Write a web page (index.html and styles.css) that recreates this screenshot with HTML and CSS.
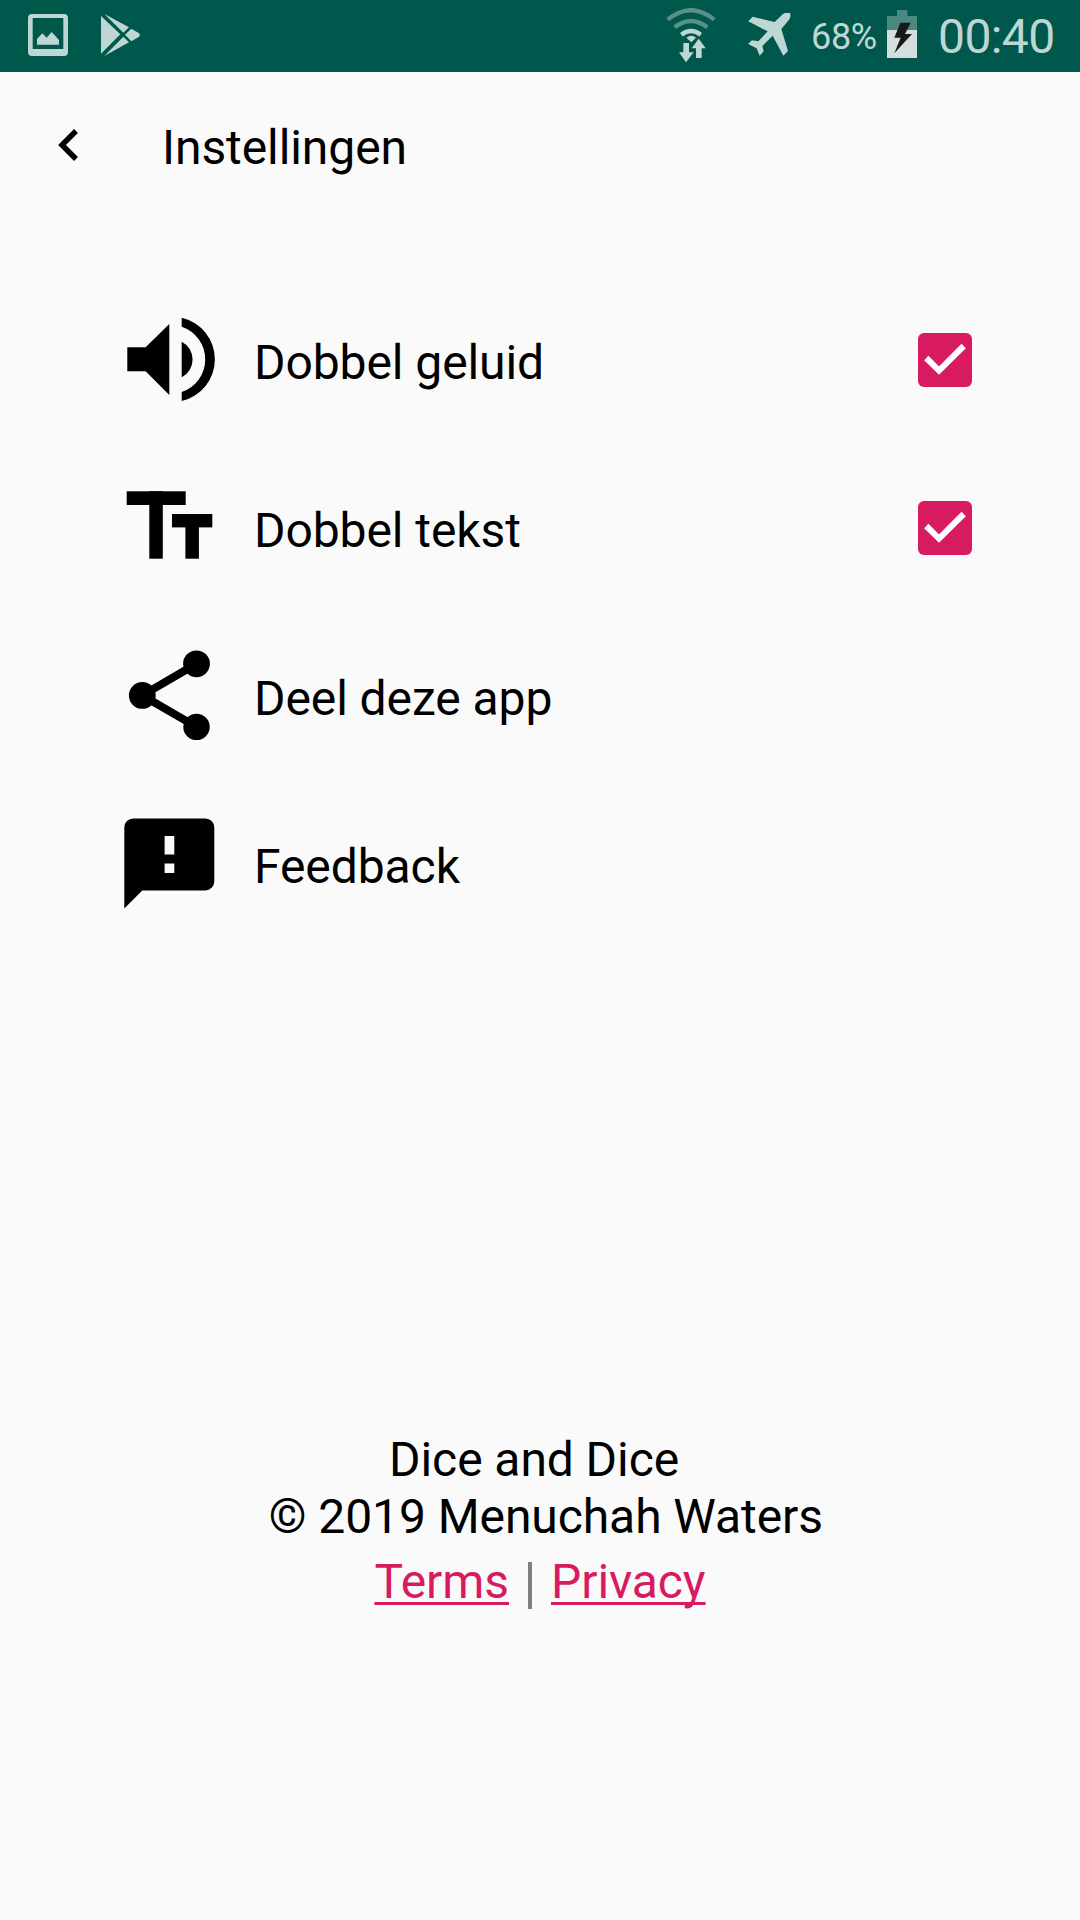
FILE: index.html
```html
<!DOCTYPE html>
<html lang="nl">
<head>
    <meta charset="UTF-8">
    <meta name="viewport" content="width=device-width, initial-scale=1.0">
    <title>Instellingen</title>
    <link rel="stylesheet" href="styles.css">
</head>
<body>

<div class="status-bar">
    <svg class="picture-icon" width="40" height="42" viewBox="0 0 120 126">
        <path fill-rule="evenodd" d="M12 0h96q12 0 12 12v102q0 12-12 12H12q-12 0-12-12V12Q0 0 12 0zM14 12v93h92V12z"/>
        <path d="M27 92V75l16-17 13 13 15-17 22 24v14z"/>
    </svg>
    <svg class="play-icon" width="39" height="42" viewBox="0 0 117 126">
        <path d="M0 6l58 55L0 119z"/>
        <path d="M10 0l74 40-17 16z"/>
        <path d="M10 126l74-41-17-17z"/>
        <path d="M91 44l22 13q7 6 0 12L91 82 72 62z"/>
    </svg>
    <div class="status-right">
        <svg class="wifi-icon" width="50" height="54" viewBox="0 0 150 162">
            <g fill="none" stroke="#bfd7d3" stroke-width="13">
                <path d="M5 35q70-57 140 0" opacity=".45"/>
                <path d="M26 58q49-38 98 0" opacity=".45"/>
                <path d="M46 80q29-22 58 0"/>
            </g>
            <path d="M61 89q15-11 29 0L76 103z"/>
            <path d="M52 105h17v28h14l-23 30-21-30h13z"/>
            <path d="M90 150v-29H77l21-29 21 29h-12v29z"/>
        </svg>
        <svg class="plane-icon" width="44" height="44" viewBox="0 0 132 132">
            <path d="M4 25l13-14 66 16 24-23c7-6 17-6 22-4 3 8 1 16-6 24l-20 24 20 66-14 14-32-60-31 31 4 16-12 13-9-22-26-13 12-11 19 3 28-30z"/>
        </svg>
        <span class="battery-text">68%</span>
        <svg class="battery-icon" width="30" height="48" viewBox="0 0 90 144">
            <path fill="#4a897f" d="M30 0h31v18h29v43H0V18h30z"/>
            <path fill="#d2dfdd" d="M0 60h90v84H0z"/>
            <path fill="#171918" d="M40 38h31L54 72h21L22 130l19-47H22z"/>
        </svg>
        <span class="clock">00:40</span>
    </div>
</div>

<div class="toolbar">
    <svg class="back-icon" width="22" height="34" viewBox="0 0 22 34">
        <path d="M19 3L5 17l14 14"/>
    </svg>
    <h1>Instellingen</h1>
</div>

<div class="settings">
    <div class="setting">
        <svg width="108" height="108" viewBox="0 0 108 108">
            <path d="M12.3 41.3h18.3L54.3 18v71L30.6 65.3H12.3z"/>
            <path d="M66.7 35.7a20 20 0 0 1 0 35.6z"/>
            <path d="M66.7 11.7a42.8 42.8 0 0 1 0 83.4v-9a34.5 34.5 0 0 0 0-65.4z"/>
        </svg>
        <span class="label">Dobbel geluid</span>
        <span class="checkbox">
            <svg width="54" height="54" viewBox="0 0 54 54"><path d="M8.3 25L21 37.6 45.7 13"/></svg>
        </span>
    </div>
    <div class="setting">
        <svg width="108" height="108" viewBox="0 0 108 108">
            <rect x="11.7" y="17.3" width="59" height="13.7"/>
            <rect x="34.3" y="17.3" width="13.5" height="67.4"/>
            <rect x="57" y="40" width="40.3" height="13.4"/>
            <rect x="70.4" y="40" width="13.5" height="44.7"/>
        </svg>
        <span class="label">Dobbel tekst</span>
        <span class="checkbox">
            <svg width="54" height="54" viewBox="0 0 54 54"><path d="M8.3 25L21 37.6 45.7 13"/></svg>
        </span>
    </div>
    <div class="setting">
        <svg width="108" height="108" viewBox="0 0 108 108">
            <path d="M81.5 21.8L27.3 53.4l54.2 31.5" fill="none" stroke="#000" stroke-width="8"/>
            <circle cx="27.3" cy="53.4" r="13.4"/>
            <circle cx="81.5" cy="21.8" r="13.4"/>
            <circle cx="81.5" cy="84.9" r="13.2"/>
        </svg>
        <span class="label">Deel deze app</span>
    </div>
    <div class="setting">
        <svg width="108" height="108" viewBox="0 0 108 108">
            <path fill-rule="evenodd" d="M18.3 8.4h72a9 9 0 0 1 9 9v54a9 9 0 0 1-9 9h-63l-18 18v-81a9 9 0 0 1 9-9zM49.6 26v18.6h9.7V26zM49.6 53.4V63h9.7v-9.6z"/>
        </svg>
        <span class="label">Feedback</span>
    </div>
</div>

<div class="footer">
    <p class="app-name">Dice and Dice&nbsp;</p>
    <p>&nbsp;© 2019 Menuchah Waters</p>
    <div class="links">
        <a href="#">Terms</a>
        <span class="divider"></span>
        <a href="#">Privacy</a>
    </div>
</div>

</body>
</html>
```
FILE: styles.css
```css
body {
    font-family: Roboto, sans-serif;
    font-size: 48px;
    line-height: 57px;
    letter-spacing: -0.08px;
    background-color: #fafafa;
    color: #000;
    margin: 0;
    height: 1920px;
    display: flex;
    flex-direction: column;
}
svg {
    display: block;
    flex-shrink: 0;
}
.status-bar {
    height: 72px;
    background-color: #00574b;
    color: #bfd7d3;
    fill: #bfd7d3;
    display: flex;
    align-items: flex-start;
    box-sizing: border-box;
    padding: 0 24px 0 28px;
}
.picture-icon {
    margin-top: 14px;
}
.play-icon {
    margin: 14px 0 0 33px;
}
.status-right {
    display: flex;
    margin-left: auto;
}
.wifi-icon {
    margin-top: 8px;
}
.plane-icon {
    margin: 13px 0 0 31px;
}
.battery-text {
    width: 66px;
    font-size: 36px;
    letter-spacing: -0.3px;
    margin: 9px 0 0 20px;
}
.battery-icon {
    margin: 10px 0 0 10px;
}
.clock {
    width: 118px;
    letter-spacing: -0.6px;
    margin: 8px 0 0 21px;
}
.toolbar {
    height: 148px;
    display: flex;
    align-items: center;
    padding-left: 57px;
}
.back-icon {
    fill: none;
    stroke: #000;
    stroke-width: 5.5;
    margin-bottom: 2px;
}
h1 {
    font-size: 48px;
    font-weight: 400;
    margin: 3px 0 0 83px;
}
.settings {
    padding: 56px 108px 0 115px;
}
.setting {
    height: 168px;
    display: flex;
    align-items: center;
}
.label {
    margin: 5px 0 0 31px;
}
.checkbox {
    width: 54px;
    height: 54px;
    margin-left: auto;
    border-radius: 6px;
    background-color: #d81b60;
}
.checkbox path {
    fill: none;
    stroke: #fff;
    stroke-width: 6;
}
.footer {
    margin-top: 483px;
    text-align: center;
}
.footer p {
    margin: 0;
}
.links {
    display: flex;
    justify-content: center;
    align-items: center;
    height: 57px;
    margin-top: 8px;
}
.links a {
    color: #d81b60;
    text-decoration-thickness: 3px;
    text-underline-offset: 4px;
    text-decoration-skip-ink: none;
}
.divider {
    width: 4px;
    height: 47px;
    margin: 7px 19px 0;
    background-color: #808080;
}
```
